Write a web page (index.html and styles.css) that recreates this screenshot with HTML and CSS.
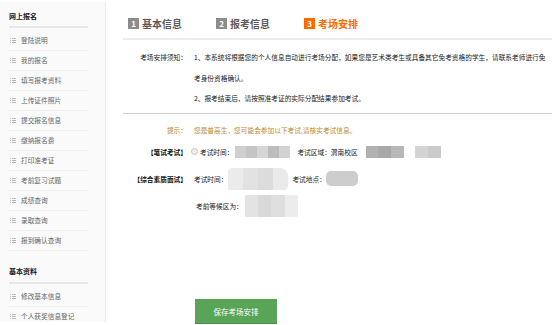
FILE: index.html
```html
<!DOCTYPE html>
<html lang="zh">
<head>
  <meta charset="UTF-8" />
  <title>考场安排</title>
  <link rel="stylesheet" href="styles.css">
</head>
<body>
  <div class="page">
    <div class="side">
      <div class="side-title">网上报名</div>
      <ul class="menu">
        <li><i class="ico"></i>登陆说明</li>
        <li><i class="ico"></i>我的报名</li>
        <li><i class="ico"></i>填写报考资料</li>
        <li><i class="ico"></i>上传证件照片</li>
        <li><i class="ico"></i>提交报名信息</li>
        <li><i class="ico"></i>缴纳报名费</li>
        <li><i class="ico"></i>打印准考证</li>
        <li><i class="ico"></i>考前复习试题</li>
        <li><i class="ico"></i>成绩查询</li>
        <li><i class="ico"></i>录取查询</li>
        <li><i class="ico"></i>报到确认查询</li>
      </ul>
      <div class="side-title second">基本资料</div>
      <ul class="menu">
        <li><i class="ico"></i>修改基本信息</li>
        <li><i class="ico"></i>个人获奖信息登记</li>
      </ul>
    </div>

    <div class="main">
      <div class="steps">
        <div class="step"><span class="num">1</span>基本信息</div>
        <div class="step"><span class="num">2</span>报考信息</div>
        <div class="step on"><span class="num">3</span>考场安排</div>
      </div>

      <div class="notice">
        <div class="label">考场安排须知：</div>
        <div class="text">
          <p>1、本系统将根据您的个人信息自动进行考场分配，如果您是艺术类考生或具备其它免考资格的学生，请联系老师进行免考身份资格确认。</p>
          <p>2、报考结束后，请按照准考证的实际分配结果参加考试。</p>
        </div>
      </div>

      <div class="row tip">
        <div class="label">提示：</div>
        <div class="text">您是普高生，您可能会参加以下考试,请核实考试信息。</div>
      </div>

      <div class="row exam">
        <div class="label">【笔试考试】</div>
        <div class="text">
          <span class="radio"></span>考试时间：
          <span class="blur b1"><i></i><i></i><i></i><i></i><i></i></span>
          <span class="field">考试区域：渭南校区</span>
          <span class="blur b2"><i></i><i></i><i></i><i class="gap"></i><i></i><i></i></span>
        </div>
      </div>

      <div class="row interview">
        <div class="label">【综合素质面试】</div>
        <div class="text">
          考试时间：
          <span class="blur b3"><i></i><i></i><i></i><i></i></span>
          <span class="field near">考试地点：</span>
          <span class="blur b4"></span>
        </div>
      </div>

      <div class="row wait">
        <div class="label"></div>
        <div class="text">
          考前等候区为：
          <span class="blur b5"><i></i><i></i><i></i><i></i></span>
        </div>
      </div>

      <div class="actions">
        <button class="save">保存考场安排</button>
      </div>
    </div>
  </div>
</body>
</html>
```

FILE: styles.css
```css
body { margin: 0; font-family: "Noto Sans CJK SC", sans-serif; color: #222; background: #fff; }
.page { display: flex; align-items: flex-start; }

.side { width: 106px; margin-top: 2px; height: 320px; background: #fafafa; border-right: 1px solid #ebebeb; box-sizing: border-box; padding: 0 17px 0 9px; }
.side-title { font-size: 7px; font-weight: bold; line-height: 10px; padding: 9px 0 5px; border-bottom: 2px solid #e6e6e6; color: #222; }
.side-title.second { padding-top: 15px; padding-bottom: 6px; }
.menu { list-style: none; margin: 0; padding: 3px 0 0; }
.menu li { height: 20px; line-height: 19px; border-bottom: 1px solid #f0f0f0; box-sizing: border-box; font-size: 6.7px; color: #666; display: flex; align-items: center; }
.ico { width: 6px; height: 5px; margin: 0 5px 0 1px; background:
  linear-gradient(#bbb, #bbb) 0 0 / 1px 1px no-repeat,
  linear-gradient(#bbb, #bbb) 0 2px / 1px 1px no-repeat,
  linear-gradient(#bbb, #bbb) 0 4px / 1px 1px no-repeat,
  linear-gradient(#bbb, #bbb) 2px 0 / 4px 1px no-repeat,
  linear-gradient(#bbb, #bbb) 2px 2px / 4px 1px no-repeat,
  linear-gradient(#bbb, #bbb) 2px 4px / 4px 1px no-repeat; }

.main { margin-left: 17px; width: 429px; }
.steps { display: flex; height: 40px; padding: 0 0 0 5px; align-items: center; border-bottom: 2px solid #ececec; box-sizing: border-box; padding-top: 9px; }
.step { display: flex; align-items: center; font-size: 10px; font-weight: bold; color: #5a5a5a; margin-right: 34px; }
.num { width: 11px; height: 11px; line-height: 11px; background: #8c8c8c; color: #fff; font-size: 8px; text-align: center; margin-right: 3px; }
.step.on { color: #ff6a00; }
.step.on .num { background: #ff6a00; }

.notice, .row { display: flex; font-size: 6.7px; }
.label { width: 64px; flex: none; text-align: right; margin-right: 7px; }
.text { flex: 1; }
.notice { padding-top: 7px; padding-bottom: 4px; border-bottom: 1px solid #cfcfcf; line-height: 20.5px; }
.notice p { margin: 0; }

.row { line-height: 20px; align-items: center; }
.tip { margin-top: 6px; color: #c08a2a; }
.tip .label { color: #c08a2a; }
.exam { margin-top: 2px; }
.exam .label, .interview .label { font-weight: bold; color: #111; }
.exam .text, .interview .text, .wait .text { display: flex; align-items: center; }
.interview { margin-top: 6px; }
.wait { margin-top: 5px; }
.wait .text { padding-left: 2px; }

.radio { width: 5px; height: 5px; border: 1px solid #c4c4c4; border-radius: 50%; background: #eee; margin: 0 2px 0 -3px; }
.field { margin-left: 7px; }
.field.near { margin-left: 4px; }

.blur { display: inline-flex; height: 12px; }
.blur i { flex: 1; background: #c8c8c8; }
.b1 { width: 55px; margin-left: 2px; }
.b1 i:nth-child(1) { background: #cfcfcf; }
.b1 i:nth-child(2) { background: #c4c4c4; }
.b1 i:nth-child(3) { background: #d6d6d6; }
.b1 i:nth-child(4) { background: #bdbdbd; }
.b1 i:nth-child(5) { background: #d2d2d2; }
.b2 { width: 75px; margin-left: 8px; }
.b2 i:nth-child(1) { background: #b2b2b2; }
.b2 i:nth-child(2) { background: #a8a8a8; }
.b2 i:nth-child(3) { background: #b8b8b8; }
.b2 i.gap { background: #fff; flex: 0.9; }
.b2 i:nth-child(5) { background: #d4d4d4; }
.b2 i:nth-child(6) { background: #cacaca; }
.b3 { width: 60px; height: 22px; margin-left: 1px; border-radius: 4px 8px 4px 2px; overflow: hidden; }
.b3 i:nth-child(1) { background: #ebebeb; }
.b3 i:nth-child(2) { background: #e2e2e2; }
.b3 i:nth-child(3) { background: #dcdcdc; }
.b3 i:nth-child(4) { background: #eaeaea; }
.b4 { width: 32px; height: 15px; background: #cdcdcd; border-radius: 5px; }
.b5 { width: 53px; height: 22px; margin-left: 2px; border-radius: 2px; overflow: hidden; }
.b5 i:nth-child(1) { background: #e3e3e3; }
.b5 i:nth-child(2) { background: #d9d9d9; }
.b5 i:nth-child(3) { background: #dedede; }
.b5 i:nth-child(4) { background: #ececec; }

.actions { padding: 79px 0 0 72px; }
.save { width: 82px; height: 25px; border: 0; border-bottom: 1px solid #4a914a; background: #58a558; color: #fff; font-family: "Noto Sans CJK SC", sans-serif; font-size: 7.5px; padding: 0; }
```
